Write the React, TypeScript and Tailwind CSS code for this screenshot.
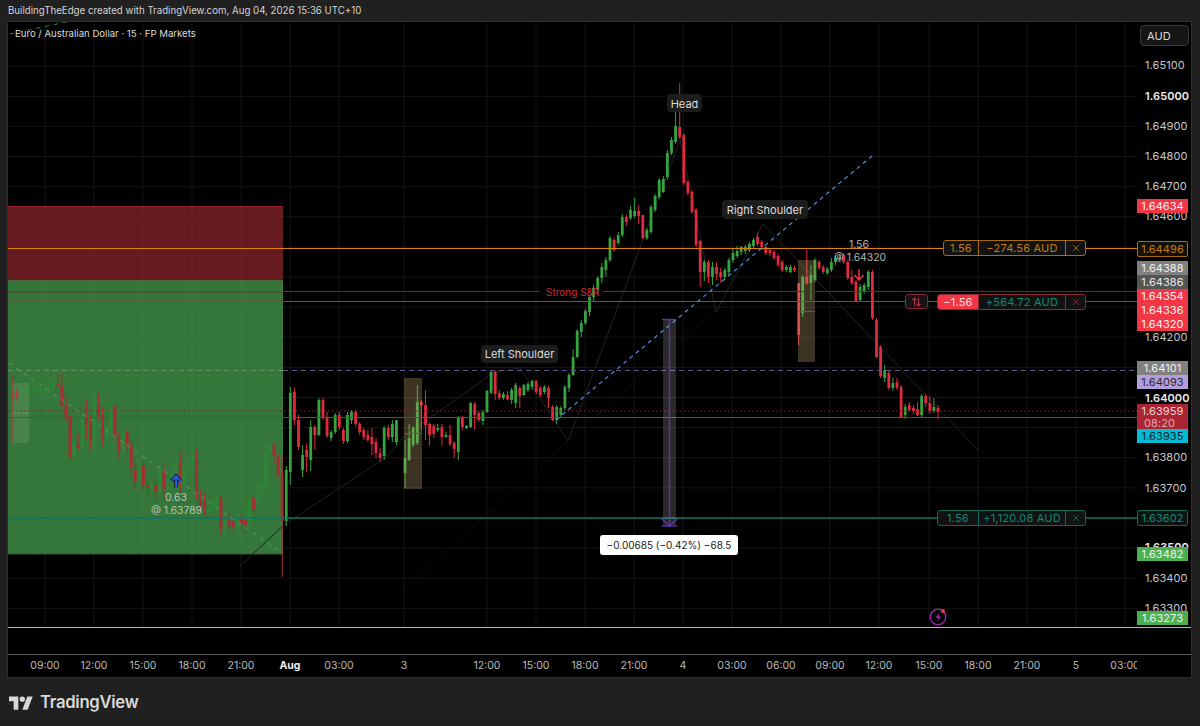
import React from "react";
import { X } from "lucide-react";

const FONT = "font-['Inter','Liberation_Sans',sans-serif]";

// Candle bodies in pixel rows of the chart: [open, close, high?, low?]
const left: number[][] = [
  [393,398,375,443],[392,398,388,402],[394,390],[392,389],[392,388],[390,388],[391,386],[392,388],[391,386],[389,386],[388,381],
  [383,386,374,388],[385,405,374,408],[405,417],[416,458,416,458],[455,443],[443,447],[447,420],[418,425,400,440],[420,440],[440,405],[405,415,393,420],
  [415,437],[437,428],[428,410],[405,437,405,437],[437,452],[452,432],[432,445],[445,467],[470,481],[481,467],[465,485],[485,487],
  [488,486],[485,492],[492,472],[472,490],[490,484],[484,470],[470,462],[462,485],[485,467],[467,463],[463,458],[458,493],[495,505],[500,512],
  [512,508],[508,500],[505,497],[499,530],[530,520],[520,525],[522,527],[527,520],[517,523],[520,525],[523,502],[498,510],[500,490],[492,485],
  [487,450],[452,445],[445,456],[456,475],[474,521,456,577],[521,470,466,526],[472,393,387,485],[392,420,388,425],[420,447,415,450],[470,455,445,477],
  [450,457,444,472],[460,427,420,471],[427,435,425,450],[435,400,398,436],[400,417,398,420],[417,436,412,438],[438,432,430,441],[432,415,413,434],[415,427,412,430],
  [430,441,428,444],[441,415,412,443],[420,412,410,424],[412,424,410,426],[424,432,422,435],[430,437,428,440],[435,440,430,442],[437,444,428,455],[442,453,438,458],
  [453,458,448,462],[456,428,426,460],[428,437,425,440],[437,424,420,442],[442,420,420,445],
];

const right: number[][] = [
  [473,458,440,488],[460,438,424,461],[445,428,426,447],[443,402,385,445],[402,405,400,430],[405,425,390,440],[424,435,423,446],[426,434,424,438],[430,428,424,432],[427,437,424,446],
  [437,435,432,438],[435,444,425,446],[443,449,441,458],[452,417,416,460],[417,427,416,430],[428,426,425,429],[427,403,402,428],[404,415,402,430],[413,420,411,422],[421,412,410,425],
  [412,391,390,413],[393,372,370,394],[372,394,371,400],[393,398,390,400],[398,394,392,400],[395,399,391,400],[400,390,388,404],[403,385,383,408],[388,396,386,408],[395,385,384,396],
  [390,384,382,392],[387,381,380,390],[381,392,380,394],[388,395,386,397],[392,387,385,394],[388,398,386,408],[407,420,405,421],[420,407,405,424],[415,408,406,418],[408,387,385,410],
  [388,375,373,392],[375,357,349,376],[357,331,329,358],[332,323,320,337],[323,311,309,325],[312,297,295,316],[297,288,285,301],[290,278,276,295],[278,267,263,283],[270,260,257,277],
  [260,238,236,262],[240,250,238,252],[243,235,232,245],[235,217,214,237],[217,222,215,226],[218,210,206,220],[216,211,198,218],[211,216,205,224],[215,238,215,239],[238,230,228,240],
  [232,207,205,234],[210,196,194,212],[197,180,178,199],[192,179,176,193],[177,153,150,180],[153,140,137,155],[142,126,112,144],[127,137,83,139],[135,183,133,185],[182,193,180,195],
  [192,212,190,214],[210,245,208,247],[241,272,240,287],[272,262,260,281],[262,277,260,283],[277,267,262,285],[267,274,262,280],[272,277,268,283],[277,270,268,280],[272,260,258,275],
  [260,253,249,263],[256,251,246,258],[252,247,246,255],[251,247,245,254],[250,244,242,252],[246,240,238,248],[237,244,233,246],[242,247,240,250],[247,253,245,255],[250,253,248,256],
  [252,258,250,260],[256,265,254,267],[262,270,260,272],[270,267,265,272],[272,267,265,273],[268,270,266,272],[283,335,283,345],[313,277,275,317],[277,283,250,285],[283,275,265,300],
  [280,260,258,282],[262,268,260,270],[267,272,265,274],[273,269,267,275],[270,262,258,272],[262,258,256,265],[259,257,255,261],[255,262,253,264],[262,278,260,280],[277,283,270,285],
  [282,301,280,302],[300,287,284,302],[292,285,283,294],[287,272,270,290],[272,318,270,320],[320,357,318,358],[347,376,345,378],[378,370,365,382],[373,388,371,390],[388,383,378,391],
  [382,388,378,390],[387,417,385,418],[415,407,404,419],[405,410,402,412],[408,411,405,414],[409,415,402,416],[415,396,394,417],[396,403,394,407],[403,411,396,414],[411,407,398,413],[408,412,405,419],
];

const hash = (n: number) => {
  const s = Math.sin(n * 12.9898) * 43758.5453;
  return s - Math.floor(s);
};

type Bar = { x: number; o: number; c: number; h: number; l: number; zone: boolean };
const bars: Bar[] = [
  ...left.map((d, i) => {
    const x = 12.9 + 4.08 * i;
    const top = Math.min(d[0], d[1]);
    const bot = Math.max(d[0], d[1]);
    return {
      x,
      o: d[0],
      c: d[1],
      h: d[2] ?? top - Math.round(2 + hash(i) * 9),
      l: d[3] ?? bot + Math.round(2 + hash(i + 300) * 8),
      zone: x < 283,
    };
  }),
  ...right.map((d, i) => ({
    x: 405 + (533 / (right.length - 1)) * i,
    o: d[0],
    c: d[1],
    h: d[2],
    l: d[3],
    zone: false,
  })),
];

const colorOf = (b: Bar) => {
  const up = b.c < b.o;
  if (b.zone) return up ? "#2e8638" : "#ab2a31";
  return up ? "#36a43e" : "#e12a3e";
};

const priceY = (p: number) => 96.3 + (1.65 - p) * 30120;
const gridPrices = [1.651, 1.65, 1.649, 1.648, 1.647, 1.646, 1.645, 1.644, 1.643, 1.642, 1.641, 1.64, 1.639, 1.638, 1.637, 1.636, 1.635, 1.634, 1.633];
const ticks = [
  { t: "09:00", x: 45 }, { t: "12:00", x: 94 }, { t: "15:00", x: 143 }, { t: "18:00", x: 192 }, { t: "21:00", x: 241 },
  { t: "Aug", x: 290, b: true }, { t: "03:00", x: 339 }, { t: "3", x: 404 }, { t: "12:00", x: 487 }, { t: "15:00", x: 536 },
  { t: "18:00", x: 585 }, { t: "21:00", x: 634 }, { t: "4", x: 683 }, { t: "03:00", x: 732 }, { t: "06:00", x: 781 },
  { t: "09:00", x: 830 }, { t: "12:00", x: 879 }, { t: "15:00", x: 929 }, { t: "18:00", x: 978 }, { t: "21:00", x: 1027 },
  { t: "5", x: 1076 }, { t: "03:00", x: 1125 },
];

const axisTicks = [
  { t: "1.65100", y: 65 }, { t: "1.65000", y: 96, b: true }, { t: "1.64900", y: 126 }, { t: "1.64800", y: 156 }, { t: "1.64700", y: 186 },
  { t: "1.64600", y: 216 }, { t: "1.64200", y: 337 }, { t: "1.64000", y: 397.5, b: true }, { t: "1.63800", y: 457 }, { t: "1.63700", y: 488 },
  { t: "1.63500", y: 547, b: true }, { t: "1.63400", y: 578 }, { t: "1.63300", y: 608 },
];

const badges = [
  { t: "1.64634", y: 199, h: 14, c: "bg-[#f23645] text-[#f4f4f4]" },
  { t: "1.64388", y: 261, h: 14, c: "bg-[#808080] text-[#f0f0f0]" },
  { t: "1.64386", y: 275, h: 14, c: "bg-[#555555] text-[#e8e8e8]" },
  { t: "1.64354", y: 289, h: 14, c: "bg-[#f23645] text-[#f4f4f4]" },
  { t: "1.64336", y: 303, h: 14, c: "bg-[#f23645] text-[#f4f4f4]" },
  { t: "1.64320", y: 317, h: 14, c: "bg-[#f23645] text-[#f4f4f4]" },
  { t: "1.64101", y: 361, h: 14, c: "bg-[#808080] text-[#f0f0f0]" },
  { t: "1.64093", y: 375, h: 14, c: "bg-[#b39ddb] text-[#2a2a2a]" },
  { t: "1.63935", y: 429, h: 14, c: "bg-[#00bcd4] text-[#10202a]" },
  { t: "1.63482", y: 547, h: 14, c: "bg-[#4caf50] text-[#f0f0f0]" },
  { t: "1.63273", y: 611, h: 14, c: "bg-[#4caf50] text-[#f0f0f0]" },
];

function Tag({ x, y, children, className }: { x: number; y: number; children: React.ReactNode; className: string }) {
  return (
    <div className={`absolute whitespace-nowrap ${className}`} style={{ left: x - 8, top: y - 22 }}>
      {children}
    </div>
  );
}

function Trade({ x, y, lead, leadClass, pnl, pnlClass, border, closeClass, w }: {
  x: number; y: number; lead: string; leadClass: string; pnl: string; pnlClass: string; border: string; closeClass: string; w: number;
}) {
  return (
    <Tag x={x} y={y} className={`flex h-4 text-[11px] leading-[14px] tracking-[0.2px] rounded-[3px] border bg-[#121212] overflow-hidden ${border}`}>
      <div className={`flex items-center justify-center border-r ${border} ${leadClass}`} style={{ width: w }}>{lead}</div>
      <div className={`flex w-[87px] items-center justify-center border-r ${border} ${pnlClass}`}>{pnl}</div>
      <div className={`flex flex-1 w-[19px] items-center justify-center ${closeClass}`}><X size={10} strokeWidth={1.8} /></div>
    </Tag>
  );
}

export default function App() {
  return (
    <div className={`flex h-[726px] w-[1200px] flex-col overflow-hidden bg-[#202020] ${FONT}`}>
      <div className="h-[21px] pl-2 pt-[4px] text-[9.7px] leading-[13px] text-[#d4d4d4]">
        BuildingTheEdge created with TradingView.com, Aug 04, 2026 15:36 UTC+10
      </div>

      <div className="ml-[7px] flex h-[657px] w-[1185px] flex-col border border-[#2e2e2e] bg-black">
        {/* price pane */}
        <div className="flex h-[605px]">
          <div className="relative w-[1129px] overflow-hidden">
            <svg className="absolute inset-0" width="1129" height="605" viewBox="8 22 1129 605">
              {gridPrices.map((p) => (
                <line key={p} x1="8" x2="1137" y1={priceY(p)} y2={priceY(p)} stroke="#151515" />
              ))}
              {ticks.map((t) => (
                <line key={t.x} x1={t.x} x2={t.x} y1="22" y2="627" stroke="#151515" />
              ))}

              <rect x="8" y="206" width="275" height="74" fill="#651a20" />
              <line x1="8" x2="283" y1="206.5" y2="206.5" stroke="#9e2530" />
              <rect x="8" y="280" width="275" height="274" fill="#35773a" />
              <line x1="8" x2="283" y1="554" y2="554" stroke="#2e5f31" />
              <line x1="8" x2="283" y1="280.5" y2="280.5" stroke="#48633a" />
              {gridPrices.filter((p) => priceY(p) > 206 && priceY(p) < 554).map((p) => (
                <line key={p} x1="8" x2="283" y1={priceY(p)} y2={priceY(p)} stroke="#ffffff" strokeOpacity="0.035" />
              ))}
              {ticks.filter((t) => t.x < 283).map((t) => (
                <line key={t.x} x1={t.x} x2={t.x} y1="206" y2="554" stroke="#ffffff" strokeOpacity="0.035" />
              ))}

              {/* pattern outlines */}
              <polyline points="240,566 285,524 385,458 405,436 494,372 520,368 568,441 680,140 716,312 763,224 978,450" fill="none" stroke="#232323" />
              <polyline points="404,590 568,441 775,258" fill="none" stroke="#1c1c1c" strokeDasharray="1.5 2.5" />

              {/* candles */}
              {bars.map((b, i) => {
                const top = Math.min(b.o, b.c);
                const h = Math.max(Math.abs(b.o - b.c), 1.5);
                const col = colorOf(b);
                return (
                  <g key={i}>
                    <line x1={b.x} x2={b.x} y1={b.h} y2={b.l} stroke={col} strokeWidth="1" />
                    <rect x={b.x - 1.4} y={top} width="2.8" height={h} fill={col} />
                  </g>
                );
              })}

              {/* marked boxes */}
              <rect x="12" y="383" width="17" height="60" fill="#ffffff" fillOpacity="0.09" />
              <line x1="12" x2="29" y1="413" y2="413" stroke="#ffffff" strokeOpacity="0.12" />
              <rect x="404" y="378" width="18" height="111" fill="#c8aa74" fillOpacity="0.3" />
              <line x1="404" x2="422" y1="433.5" y2="433.5" stroke="#8a3f8a" />
              <rect x="798" y="260" width="17" height="102" fill="#c8aa74" fillOpacity="0.3" />
              <line x1="798" x2="815" y1="311.5" y2="311.5" stroke="#8a3f8a" />

              {/* levels */}
              <line x1="8" x2="1137" y1="248.5" y2="248.5" stroke="#d9860a" />
              <line x1="8" x2="283" y1="292" y2="292" stroke="#6a3a30" />
              <line x1="283" x2="540" y1="291.5" y2="291.5" stroke="#7c2030" />
              <line x1="603" x2="1137" y1="291.5" y2="291.5" stroke="#7c2030" />
              <line x1="8" x2="283" y1="301" y2="301" stroke="#7a4a36" />
              <line x1="283" x2="1137" y1="301.5" y2="301.5" stroke="#c02a3e" />
              <line x1="8" x2="283" y1="370.5" y2="370.5" stroke="#8f9f90" strokeDasharray="5 4" strokeOpacity="0.6" />
              <line x1="283" x2="1137" y1="370.5" y2="370.5" stroke="#5f5690" strokeDasharray="5 4" />
              <line x1="8" x2="1137" y1="411" y2="411" stroke="#8a2030" strokeDasharray="1.5 2.5" />
              <line x1="8" x2="1137" y1="417.5" y2="417.5" stroke="#0c6f78" />
              <line x1="8" x2="1137" y1="518" y2="518" stroke="#0b7565" strokeWidth="1.6" />

              {/* falling trend on the left */}
              <line x1="9" y1="363" x2="282" y2="553" stroke="#9fb0a0" strokeDasharray="4 5" strokeOpacity="0.5" />
              <line x1="10" y1="34" x2="66" y2="22" stroke="#2d8a36" strokeDasharray="4 5" />
              <line x1="556" y1="420" x2="872" y2="156" stroke="#4f8fe6" strokeWidth="1.2" strokeDasharray="4 4" />

              {/* measure */}
              <rect x="663" y="319" width="13" height="206" fill="#ffffff" fillOpacity="0.16" />
              <line x1="669.5" x2="669.5" y1="319" y2="526" stroke="#5e35b1" strokeWidth="1.4" />
              <line x1="662" x2="676" y1="319.5" y2="319.5" stroke="#5e35b1" strokeWidth="1.4" />
              <line x1="662" x2="677" y1="526" y2="526" stroke="#5e35b1" strokeWidth="1.4" />
              <polyline points="661,518 669.5,526 678,518" fill="none" stroke="#5e35b1" strokeWidth="1.4" />

              {/* executions */}
              <path d="M176 488v-11M171.5 481l4.5-5 4.5 5" fill="none" stroke="#101418" strokeWidth="3.4" />
              <path d="M176 488v-11M171.5 481l4.5-5 4.5 5" fill="none" stroke="#2962ff" strokeWidth="1.8" />
              <path d="M859 269v10M854.5 275l4.5 5 4.5-5" fill="none" stroke="#f23645" strokeWidth="1.4" />

              {/* idea marker */}
              <circle cx="938" cy="617" r="7.8" fill="none" stroke="#9c27b0" strokeWidth="1.3" />
              <path d="M939.5 612.5 935.5 618h2.8l-1.1 3.8 4-5.3h-2.8z" fill="#9c27b0" />
              <circle cx="943" cy="611" r="2" fill="#f23645" />
            </svg>

            <div className="absolute left-[7px] top-[5px] text-[9.6px] leading-[14px] text-[#dcdcdc]">
              Euro / Australian Dollar · 15 · FP Markets
            </div>

            <Tag x={667} y={94} className="flex h-[18px] w-[35px] items-center justify-center rounded bg-[#1c1c1c] text-[11px] leading-[18px] pt-[1px] text-[#dcdcdc]">Head</Tag>
            <Tag x={722} y={200} className="flex h-[19px] w-[86px] items-center justify-center rounded bg-[#1c1c1c] text-[11px] pt-[1px] text-[#dcdcdc]">Right Shoulder</Tag>
            <Tag x={481} y={345} className="flex h-[18px] w-[77px] items-center justify-center rounded bg-[#1c1c1c] text-[11px] pt-[1px] text-[#dcdcdc]">Left Shoulder</Tag>
            <Tag x={546} y={285} className="text-[10px] leading-[14px] text-[#c92a3c]">Strong S&amp;R</Tag>

            <Tag x={839} y={239} className="w-10 text-center text-[10.5px] leading-[12px] text-[#b4b4b4]">1.56</Tag>
            <Tag x={834} y={251} className="text-[10.3px] leading-[12px] text-[#b4b4b4]">@ 1.64320</Tag>
            <Tag x={156} y={492} className="w-10 text-center text-[10.5px] leading-[12px] text-[#b8c4b8]">0.63</Tag>
            <Tag x={151} y={504} className="text-[10.3px] leading-[12px] text-[#b8c4b8]">@ 1.63789</Tag>

            <Tag x={600} y={535} className="flex h-5 w-[138px] items-center justify-center rounded-[3px] bg-white text-[10px] text-[#1a1a1a]">−0.00685 (−0.42%) −68.5</Tag>

            <Trade x={943} y={240} w={35} lead="1.56" leadClass="text-[#c27c10]" pnl="−274.56 AUD" pnlClass="text-[#c27c10]" border="border-[#a86c10]" closeClass="text-[#c27c10]" />
            <Trade x={937} y={294} w={41} lead="−1.56" leadClass="bg-[#f23645] text-[#f4dfe0]" pnl="+564.72 AUD" pnlClass="text-[#0e8a76]" border="border-[#8c2634]" closeClass="text-[#b82c3c]" />
            <Trade x={937} y={510} w={41} lead="1.56" leadClass="text-[#0e8a76]" pnl="+1,120.08 AUD" pnlClass="text-[#0e8a76]" border="border-[#0b6a5c]" closeClass="text-[#0e8a76]" />

            <Tag x={905} y={294} className="flex h-[15px] w-[23px] items-center justify-center rounded-[3px] border border-[#8c2634] bg-[#141414]">
              <svg width="11" height="10" viewBox="0 0 11 10" fill="none" stroke="#a83040" strokeWidth="1.2">
                <path d="M3.5 9V1.2M1.4 3.2 3.5 1l2.1 2.2M7.5 1v7.8M5.5 6.8l2 2.2 2.1-2.2" />
              </svg>
            </Tag>
          </div>

          {/* price axis */}
          <div className="relative w-[54px] text-[11px] leading-[14px] tracking-[0.08px] text-[#c8c8c8]">
            {axisTicks.map((t) => (
              <div
                key={t.t}
                className={`absolute left-2 ${t.b ? "font-semibold text-[#eeeeee]" : ""}`}
                style={{ top: t.y - 22 - 7 }}
              >
                {t.t}
              </div>
            ))}
            <div className="absolute left-[3px] top-[3px] flex h-[21px] w-[49px] items-center rounded border border-[#3a3a3a] bg-[#161616] pl-[6px] text-[11px] text-[#dcdcdc]">
              AUD
            </div>
            {badges.map((b) => (
              <div
                key={b.t}
                className={`absolute left-0 flex w-[51px] items-center justify-center ${b.c}`}
                style={{ top: b.y - 22, height: b.h }}
              >
                {b.t}
              </div>
            ))}
            <div className="absolute left-0 top-[219px] flex h-4 w-[51px] items-center justify-center rounded-[2px] border border-[#a86c10] bg-[#141008] text-[#c27c10]">1.64496</div>
            <div className="absolute left-0 top-[488px] flex h-4 w-[51px] items-center justify-center rounded-[2px] border border-[#0b6a5c] bg-[#0c1412] text-[#0e8a76]">1.63602</div>
            <div className="absolute left-0 top-[382px] flex h-[25px] w-[51px] flex-col items-center justify-center bg-[#aa2533] leading-[12px] text-[#ecd2d4]">
              <span>1.63959</span>
              <span className="w-full pl-[7px] text-[#e0a8ad]">08:20</span>
            </div>
          </div>
        </div>

        <div className="h-[28px] shrink-0 border-y border-t-[#b8b8b8] border-b-[#5a5a5a]" />

        {/* time axis */}
        <div className="relative h-[21px] w-[1129px] overflow-hidden text-[10.5px] leading-[21px] text-[#bcbcbc]">
          {ticks.map((t) => (
            <span
              key={t.x}
              className={`absolute -translate-x-1/2 ${t.b ? "font-bold text-[#eeeeee]" : ""}`}
              style={{ left: t.x - 8 }}
            >
              {t.t}
            </span>
          ))}
        </div>
      </div>

      {/* brand */}
      <div className="flex flex-1 items-center gap-[7px] pl-[9px] pt-[1px]">
        <svg width="24" height="15" viewBox="0 2 36 22" fill="#d8d8d8">
          <path d="M14 24H7V11H0V4h14z" />
          <circle cx="20" cy="8" r="4" />
          <path d="M28 24h-8l7.5-20h8z" />
        </svg>
        <span className="text-[16.7px] font-semibold leading-none tracking-[-0.3px] text-[#d8d8d8]">TradingView</span>
      </div>
    </div>
  );
}
